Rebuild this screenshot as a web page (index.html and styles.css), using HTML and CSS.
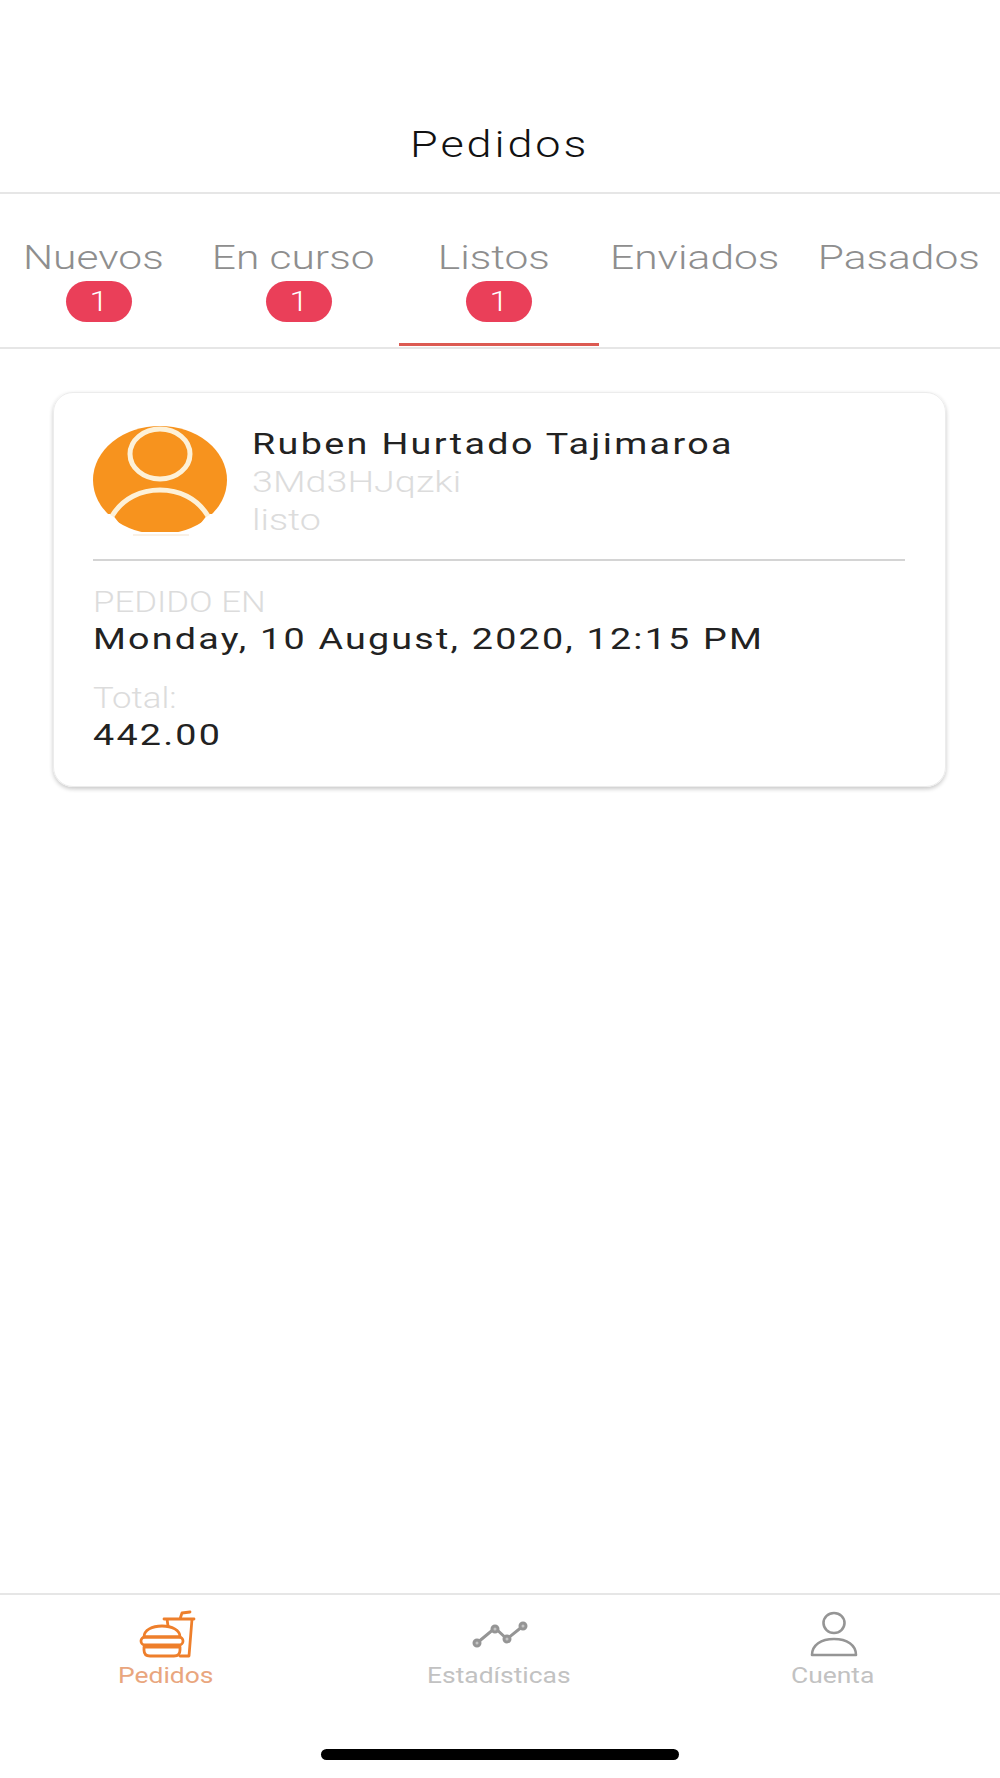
FILE: index.html
```html
<!DOCTYPE html>
<html lang="es">
<head>
    <meta charset="UTF-8">
    <meta name="viewport" content="width=device-width, initial-scale=1.0">
    <link rel="stylesheet" href="styles.css">
</head>
<body>

    <!-- Cabecera -->
    <header class="top-bar">
        <h1>Pedidos</h1>
    </header>

    <!-- Pestañas -->
    <nav class="tabs">
        <a class="tab"><span class="tab-label">Nuevos</span><span class="badge"><span class="badge-num">1</span></span></a>
        <a class="tab"><span class="tab-label">En curso</span><span class="badge"><span class="badge-num">1</span></span></a>
        <a class="tab active"><span class="tab-label">Listos</span><span class="badge"><span class="badge-num">1</span></span></a>
        <a class="tab"><span class="tab-label">Enviados</span></a>
        <a class="tab"><span class="tab-label">Pasados</span></a>
    </nav>

    <main class="content">
        <div class="card">
            <div class="customer">
                <svg class="avatar" viewBox="0 0 134 112">
                    <ellipse cx="67" cy="54" rx="67" ry="54" fill="#f7931e"/>
                    <path d="M0 112 V88 H19 L33 106 H101 L115 88 H134 V112 Z" fill="#fff"/>
                    <ellipse cx="67" cy="28" rx="30" ry="25" fill="#f7931e" stroke="#fdf1d8" stroke-width="5"/>
                    <path d="M19 90 C30 72 48 64 67 64 C86 64 104 72 115 90" fill="none" stroke="#fdf1d8" stroke-width="5"/>
                    <path d="M40 109 H96" stroke="#f3e3cf" stroke-width="1"/>
                </svg>
                <div class="customer-info">
                    <div class="name">Ruben Hurtado Tajimaroa</div>
                    <div class="muted">3Md3HJqzki</div>
                    <div class="muted">listo</div>
                </div>
            </div>
            <div class="order-field">
                <div class="muted field-label">PEDIDO EN</div>
                <div class="value">Monday, 10 August, 2020, 12:15 PM</div>
            </div>
            <div class="order-field">
                <div class="muted field-label">Total:</div>
                <div class="value">442.00</div>
            </div>
        </div>
    </main>

    <!-- Menu inferior -->
    <footer class="bottom-nav">
        <a class="nav-item active">
            <svg class="nav-icon" viewBox="0 0 60 50" fill="none" stroke="#ee7f2b" stroke-width="2.8" stroke-linejoin="round" stroke-linecap="round">
                <path d="M27 10 H57 M55 10 L52 47 H43 M30 10 L31 17 M43 10 L45 4 L53 3"/>
                <path d="M7 28 C7 21 15 17 25 17 S43 21 43 28 Z"/>
                <rect x="4" y="28" width="42" height="8" rx="4"/>
                <path d="M7 38 H43 V41 Q43 47 37 47 H13 Q7 47 7 41 Z"/>
            </svg>
            <span class="nav-label">Pedidos</span>
        </a>
        <a class="nav-item">
            <svg class="nav-icon" viewBox="0 0 60 50" fill="none" stroke="#959595" stroke-width="3">
                <path d="M7 34 L25 19 L37 30 L53 17"/>
                <circle cx="7" cy="34" r="3" fill="#c4c4c4"/>
                <circle cx="25" cy="20" r="3" fill="#c4c4c4"/>
                <circle cx="37" cy="30" r="3" fill="#c4c4c4"/>
                <circle cx="53" cy="17" r="3" fill="#c4c4c4"/>
            </svg>
            <span class="nav-label">Estadísticas</span>
        </a>
        <a class="nav-item">
            <svg class="nav-icon" viewBox="0 0 60 50" fill="none" stroke="#959595" stroke-width="2.6" stroke-linejoin="round">
                <ellipse cx="30" cy="14" rx="10.5" ry="10"/>
                <path d="M8 46 C8 36 17 30 30 30 S52 36 52 46 Z"/>
            </svg>
            <span class="nav-label">Cuenta</span>
        </a>
        <div class="home-bar"></div>
    </footer>

</body>
</html>
```

FILE: styles.css
```css
:root {
    --line-color: #e6e6e6;
    --text-color: #111;
    --muted-color: #dcdcdc;
    --tab-color: #8e8e8e;
}
* {
    box-sizing: border-box;
}
html, body {
    margin: 0;
    padding: 0;
}
body {
    width: 1000px;
    height: 1778px;
    overflow: hidden;
    display: flex;
    flex-direction: column;
    font-family: Roboto, "Liberation Sans", sans-serif;
    background: #fff;
    color: var(--text-color);
}
/* Cabecera */
.top-bar {
    height: 194px;
    padding-top: 121px;
    border-bottom: 2px solid var(--line-color);
}
/* The screenshot is stretched sideways, so the text gets a scaleX */
.top-bar h1 {
    width: fit-content;
    margin: 0 auto;
    font-size: 36px;
    line-height: 48px;
    font-weight: 300;
    letter-spacing: 2.3px;
    transform: scaleX(1.25);
}
/* Pestañas */
.tabs {
    height: 155px;
    display: grid;
    grid-template-columns: 199px 200px 200px 202px 199px;
    border-bottom: 2px solid var(--line-color);
}
.tab {
    display: flex;
    flex-direction: column;
    align-items: center;
    padding-top: 41px;
    color: var(--tab-color);
}
.tab.active {
    border-bottom: 3px solid #dc5a52;
    margin-bottom: 1px;
}
.tab-label {
    margin-right: 11px;
    font-size: 34px;
    line-height: 44px;
    font-weight: 300;
    transform: scaleX(1.25);
}
.tab:first-child .tab-label {
    margin-right: 13px;
}
.tab:last-child .tab-label {
    margin-right: 3px;
}
.badge {
    width: 66px;
    height: 41px;
    margin-top: 2px;
    margin-right: 1px;
    border-radius: 21px;
    background: #ea3f59;
    color: #fff;
    font-size: 28px;
    line-height: 41px;
    font-weight: 300;
    text-align: center;
}
.badge-num {
    display: inline-block;
    transform: scaleX(1.2);
}
/* Tarjeta */
.content {
    flex: 1;
    padding: 43px 54px 0 53px;
}
.card {
    height: 395px;
    padding: 33px 40px 0 39px;
    border: 1px solid #ececec;
    border-radius: 20px;
    box-shadow: 0 2px 4px rgba(0, 0, 0, 0.22);
}
.customer {
    display: flex;
    gap: 25px;
    height: 135px;
    border-bottom: 2px solid #d4d4d4;
}
.avatar {
    width: 134px;
    height: 112px;
    flex: none;
}
.name {
    width: fit-content;
    margin-bottom: 1px;
    font-size: 29px;
    line-height: 36px;
    letter-spacing: 1.8px;
    color: #222;
    transform: scaleX(1.3);
    transform-origin: left;
    white-space: nowrap;
}
.muted {
    width: fit-content;
    font-size: 29px;
    line-height: 38px;
    font-weight: 300;
    color: var(--muted-color);
    transform: scaleX(1.3);
    transform-origin: left;
}
.muted.field-label {
    line-height: 37px;
    transform: scaleX(1.2);
}
.order-field {
    margin-top: 23px;
}
.value {
    width: fit-content;
    font-size: 29px;
    line-height: 36px;
    letter-spacing: 1.7px;
    color: #222;
    transform: scaleX(1.3);
    transform-origin: left;
    white-space: nowrap;
}
/* Menu inferior */
.bottom-nav {
    position: relative;
    height: 185px;
    display: grid;
    grid-template-columns: 333px 334px 333px;
    border-top: 2px solid var(--line-color);
}
.nav-item {
    display: flex;
    flex-direction: column;
    align-items: center;
    padding-top: 14px;
    color: #c2c2c2;
}
.nav-item.active {
    color: #e9a67e;
}
.nav-icon {
    width: 60px;
    height: 50px;
}
.nav-label {
    margin-top: 3px;
    margin-right: 2px;
    font-size: 22px;
    line-height: 28px;
    transform: scaleX(1.2);
}
.home-bar {
    position: absolute;
    left: 321px;
    bottom: 18px;
    width: 358px;
    height: 11px;
    border-radius: 6px;
    background: #000;
}
```
